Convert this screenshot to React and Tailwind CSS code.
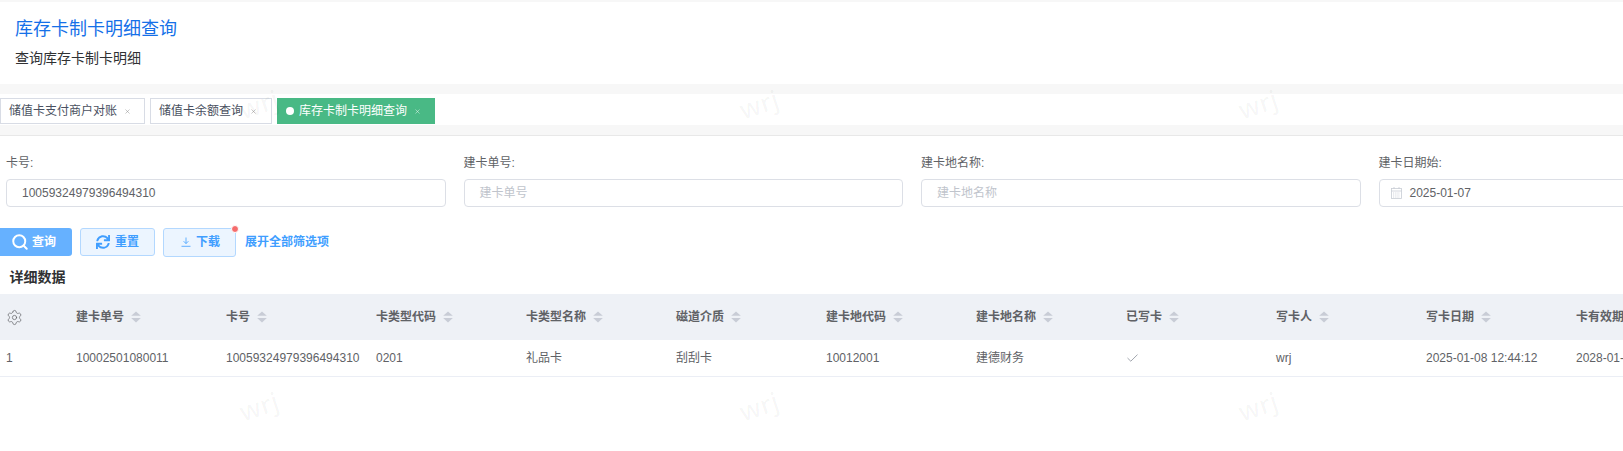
import React from 'react';
import { Search, Settings, X } from 'lucide-react';
import { FaSync } from 'react-icons/fa';

const fontStack = { fontFamily: '"Liberation Sans", "Noto Sans CJK SC", sans-serif' };

const columns = ['建卡单号', '卡号', '卡类型代码', '卡类型名称', '磁道介质', '建卡地代码', '建卡地名称', '已写卡', '写卡人', '写卡日期', '卡有效期'];
const row = ['10002501080011', '10059324979396494310', '0201', '礼品卡', '刮刮卡', '10012001', '建德财务', null, 'wrj', '2025-01-08 12:44:12', '2028-01-08'];

const SortIcon = () => (
  <svg width="10" height="12" viewBox="0 0 10 12" className="ml-[7px] shrink-0" fill="#c8ccd6">
    <path d="M5 0.5 L9.8 4.8 L0.2 4.8 Z" />
    <path d="M0.2 7 L9.8 7 L5 11.5 Z" />
  </svg>
);

const DownloadIcon = () => (
  <svg width="10" height="10" viewBox="0 0 10 10" fill="none" stroke="#409eff" strokeWidth="0.8">
    <path d="M5 0.5 V6.5 M2.6 4.2 L5 6.6 L7.4 4.2" />
    <path d="M0.5 9.3 H9.5" />
  </svg>
);

const CalendarIcon = () => (
  <svg width="11" height="12" viewBox="0 0 11 12" fill="none" stroke="#c8ccd4" strokeWidth="0.8">
    <rect x="0.5" y="1.5" width="10" height="10" />
    <path d="M0.5 4 H10.5 M3 0 V2 M8 0 V2" />
    <path d="M2 6 H9 M2 8 H9 M2 10 H9" strokeDasharray="1 0.8" />
  </svg>
);

const Tab = ({ label, active, className }) => (
  <div
    className={
      active
        ? 'flex h-[26px] items-center bg-[#49b985] text-white ' + className
        : 'flex h-[26px] items-center border border-[#d8dce5] bg-white text-[#495060] ' + className
    }
  >
    {active && <span className="mr-[5px] size-[8px] rounded-full bg-white" />}
    <span className="text-[12px] leading-none">{label}</span>
    <X size={7} strokeWidth={1.5} className={active ? 'ml-[7px] text-white' : 'ml-[7px] text-[#808080]'} />
  </div>
);

const Field = ({ label, children }) => (
  <div>
    <div className="mb-[8px] text-[12px] leading-[16px] text-[#606266]">{label}</div>
    <div className="flex h-[28px] items-center rounded-[4px] border border-[#dcdfe6] bg-white pb-[1px] text-[12px]">
      {children}
    </div>
  </div>
);

const Watermark = ({ className }) => (
  <div
    className={
      'pointer-events-none absolute -rotate-[18deg] text-[26px] font-semibold leading-none text-black/[0.035] ' + className
    }
    style={{ fontFamily: '"Open Sans", sans-serif' }}
  >
    wrj
  </div>
);

export default function App() {
  return (
    <div className="relative h-[451px] w-[1623px] overflow-hidden bg-white" style={fontStack}>
      {/* page title */}
      <div className="h-[2px] bg-[#f7f7f7]" />
      <div className="h-[82px] pl-[15px] pt-[15px]">
        <h1 className="text-[18px] font-normal leading-[24px] text-[#1570e8]">库存卡制卡明细查询</h1>
        <p className="mt-[7px] text-[14px] leading-[20px] text-[#303133]">查询库存卡制卡明细</p>
      </div>
      <div className="h-[10px] bg-[#f7f7f7]" />

      {/* tag bar */}
      <div className="flex h-[31px] gap-[5px] pt-[4px]">
        <Tab label="储值卡支付商户对账" className="w-[145px] pl-[8px]" />
        <Tab label="储值卡余额查询" className="w-[122px] pl-[8px]" />
        <Tab label="库存卡制卡明细查询" active className="w-[158px] pl-[9px]" />
      </div>
      <div className="h-[11px] border-b border-[#e8e8e8] bg-[#f7f7f7]" />

      {/* filters */}
      <div className="grid w-[1830px] grid-cols-[repeat(4,439.5px)] gap-x-[18px] pl-[6px] pt-[19px]">
        <Field label="卡号:">
          <span className="pl-[15px] text-[#606266]">10059324979396494310</span>
        </Field>
        <Field label="建卡单号:">
          <span className="pl-[15px] text-[#c0c4cc]">建卡单号</span>
        </Field>
        <Field label="建卡地名称:">
          <span className="pl-[15px] text-[#c0c4cc]">建卡地名称</span>
        </Field>
        <Field label="建卡日期始:">
          <span className="ml-[11px] mr-[8px]"><CalendarIcon /></span>
          <span className="text-[#606266]">2025-01-07</span>
        </Field>
      </div>

      {/* actions */}
      <div className="mt-[21px] flex items-start text-[12px] font-bold">
        <button className="flex h-[28px] w-[72px] items-center rounded-r-[3px] bg-[#66b1ff] pl-[11px] text-white">
          <Search size={18} strokeWidth={2.6} />
          <span className="ml-[3px]">查询</span>
        </button>
        <button className="ml-[8px] flex h-[28px] w-[75px] items-center rounded-[3px] border border-[#b3d8ff] bg-[#ecf5ff] pl-[15px] text-[#409eff]">
          <FaSync size={14} />
          <span className="ml-[5px]">重置</span>
        </button>
        <button className="relative ml-[8px] flex h-[29px] w-[73px] items-center rounded-[3px] border border-[#b3d8ff] bg-[#ecf5ff] pb-[2px] pl-[17px] text-[#409eff]">
          <DownloadIcon />
          <span className="ml-[5px]">下载</span>
          <span className="absolute right-[-4px] top-[-4px] size-[8px] rounded-full border border-white bg-[#f56c6c]" />
        </button>
        <span className="ml-[9px] mt-[6px] leading-[16px] text-[#409eff]">展开全部筛选项</span>
      </div>

      <h2 className="ml-[9.5px] mt-[10px] text-[14px] font-bold leading-[20px] text-[#303133]">详细数据</h2>

      {/* table */}
      <table className="mt-[7px] w-[1720px] table-fixed border-collapse text-left text-[12px] text-[#606266]">
        <colgroup>
          <col className="w-[70px]" />
          {columns.map((c) => (
            <col key={c} className="w-[150px]" />
          ))}
        </colgroup>
        <thead>
          <tr className="h-[46px] bg-[#eef1f6]">
            <th className="pl-[6px] font-normal">
              <Settings size={17} strokeWidth={1} className="text-[#606266]" />
            </th>
            {columns.map((c) => (
              <th key={c} className="pl-[6px] font-bold">
                <div className="flex items-center">
                  <span>{c}</span>
                  <SortIcon />
                </div>
              </th>
            ))}
          </tr>
        </thead>
        <tbody>
          <tr className="h-[36px] border-b border-[#ebeef5]">
            <td className="pl-[6px]">1</td>
            {row.map((v, i) => (
              <td key={i} className="whitespace-nowrap pl-[6px]">
                {v === null ? (
                  <svg width="11" height="8" viewBox="0 0 11 8" fill="none" stroke="#8a8f99" strokeWidth="0.8" className="ml-[1px]">
                    <path d="M0.5 4 L3.8 7.2 L10.5 0.6" />
                  </svg>
                ) : (
                  v
                )}
              </td>
            ))}
          </tr>
        </tbody>
      </table>

      {/* watermark */}
      <Watermark className="left-[239px] top-[91px]" />
      <Watermark className="left-[739px] top-[91px]" />
      <Watermark className="left-[1238px] top-[91px]" />
      <Watermark className="left-[239px] top-[393px]" />
      <Watermark className="left-[739px] top-[393px]" />
      <Watermark className="left-[1238px] top-[393px]" />
    </div>
  );
}
